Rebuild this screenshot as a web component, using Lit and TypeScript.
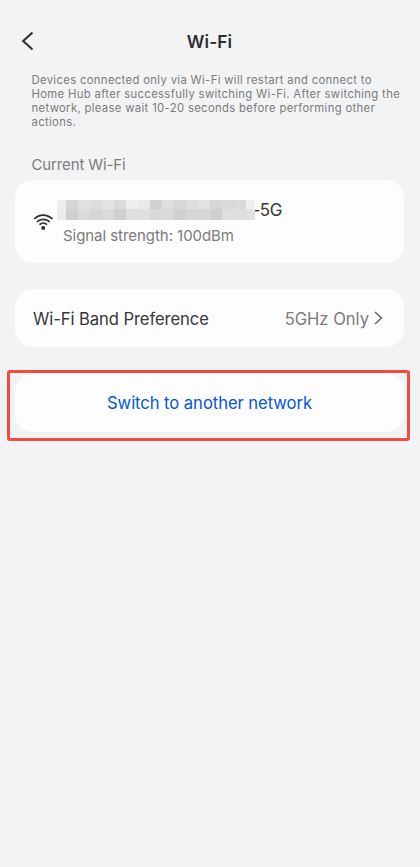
import { LitElement, html, css } from "lit";
import { customElement } from "lit/decorators.js";

const MASK = [
  ["#efefef", "#d5d5d5", "#e0e0e0", "#dddddd", "#e3e3e3", "#dadada", "#eeeeee", "#eaeaea", "#d1d1d1", "#dedede", "#d7d7d7", "#dedede", "#e2e2e2", "#d6d6d6", "#d9d9d9", "#dadada", "#efefef"],
  ["#ebebeb", "#cfcfcf", "#dadada", "#d6d6d6", "#dadada", "#d0d0d0", "#dfdfdf", "#e0e0e0", "#d9d9d9", "#dadada", "#d0d0d0", "#d6d6d6", "#d7d7d7", "#d0d0d0", "#dfdfdf", "#dfdfdf", "#e2e2e2"],
];

@customElement("app-root")
export class AppRoot extends LitElement {
  static styles = css`
    :host {
      display: block;
      box-sizing: border-box;
      height: 867px;
      overflow: hidden;
      background: #f2f3f5;
      color: #383838;
      font-family: Inter, "Liberation Sans", sans-serif;
      padding: 0 16px 0 15px;
    }
    header {
      display: grid;
      grid-template-columns: 40px 1fr 40px;
      align-items: center;
      height: 44px;
      padding-top: 19px;
    }
    .back { margin-left: 6px; display: block; }
    h1 {
      margin: 2px 0 0;
      text-align: center;
      font-size: 17.3px;
      line-height: 24px;
      font-weight: 600;
      letter-spacing: 0.1px;
      color: #2e2e2e;
    }
    .note {
      margin: 10px 0 0 16.5px;
      font-size: 11.3px;
      line-height: 14px;
      letter-spacing: 0.335px;
      color: #7b7b7b;
      white-space: nowrap;
    }
    .label {
      margin: 26px 0 0 16.5px;
      font-size: 15px;
      line-height: 20px;
      letter-spacing: -0.13px;
      color: #7b7b7b;
    }
    .card {
      box-sizing: border-box;
      background: #fdfdfd;
      border-radius: 18px;
      display: flex;
      align-items: center;
    }
    .current { height: 83px; margin-top: 5px; padding: 2px 0 0 18px; }
    .wifi { display: block; flex: none; }
    .info { margin-left: 4px; }
    .name { display: flex; align-items: center; height: 20px; font-size: 17px; line-height: 20px; letter-spacing: -0.5px; }
    .mask { display: grid; grid-template: 9px 11px / 9px repeat(15, 12px) 9px; z-index: 1; }
    .suffix { margin-left: -2.5px; }
    .signal { margin: 6px 0 0 6px; font-size: 15px; line-height: 20px; letter-spacing: -0.05px; color: #7b7b7b; }
    .band { height: 58px; margin-top: 26px; padding: 1px 21px 0 18px; justify-content: space-between; font-size: 16.6px; letter-spacing: -0.08px; }
    .value { display: flex; align-items: center; gap: 5px; color: #7b7b7b; letter-spacing: -0.02px; }
    .arrow { display: block; margin-top: -2px; }
    .highlight {
      box-sizing: border-box;
      margin: 23px -6px 0 -8px;
      height: 71px;
      border: 3px solid #f24b3f;
      border-radius: 3px;
      padding: 0 3px 0 5px;
    }
    .switch { height: 58px; margin-top: 1px; justify-content: center; font-size: 16.6px; letter-spacing: -0.05px; color: #0355e2; }
  `;

  render() {
    return html`
      <header>
        <svg class="back" width="14" height="20" viewBox="0 0 14 20" fill="none" stroke="#303030" stroke-width="2.1">
          <path d="M11.5 1.5 2.2 10l9.3 8.5" />
        </svg>
        <h1>Wi-Fi</h1>
      </header>
      <p class="note">
        Devices connected only via Wi-Fi will restart and connect to<br />Home Hub after successfully switching Wi-Fi.
        After switching the<br />network, please wait 10-20 seconds before performing other<br />actions.
      </p>
      <div class="label">Current Wi-Fi</div>
      <section class="card current">
        <svg class="wifi" width="20" height="17" viewBox="0 0 20 17" fill="none" stroke="#303030" stroke-width="1.7">
          <path d="M1.2 5C6.4-.1 13.8-.1 19.4 5M3.9 7.9c3.6-3.4 9.2-3.4 12.8 0M6.5 10.6c2.1-2 5.4-2 7.5 0" />
          <circle cx="10.2" cy="14" r="2" fill="#303030" stroke="none" />
        </svg>
        <div class="info">
          <div class="name">
            <span class="mask">${MASK.flat().map((c) => html`<i style="background:${c}"></i>`)}</span>
            <span class="suffix">-5G</span>
          </div>
          <div class="signal">Signal strength: 100dBm</div>
        </div>
      </section>
      <section class="card band">
        <span class="title">Wi-Fi Band Preference</span>
        <span class="value">
          <span class="choice">5GHz Only</span>
          <svg class="arrow" width="9" height="14" viewBox="0 0 9 14" fill="none" stroke="#666" stroke-width="1.5">
            <path d="m1 1 6.5 6L1 13" />
          </svg>
        </span>
      </section>
      <div class="highlight">
        <section class="card switch"><span>Switch to another network</span></section>
      </div>
    `;
  }
}
